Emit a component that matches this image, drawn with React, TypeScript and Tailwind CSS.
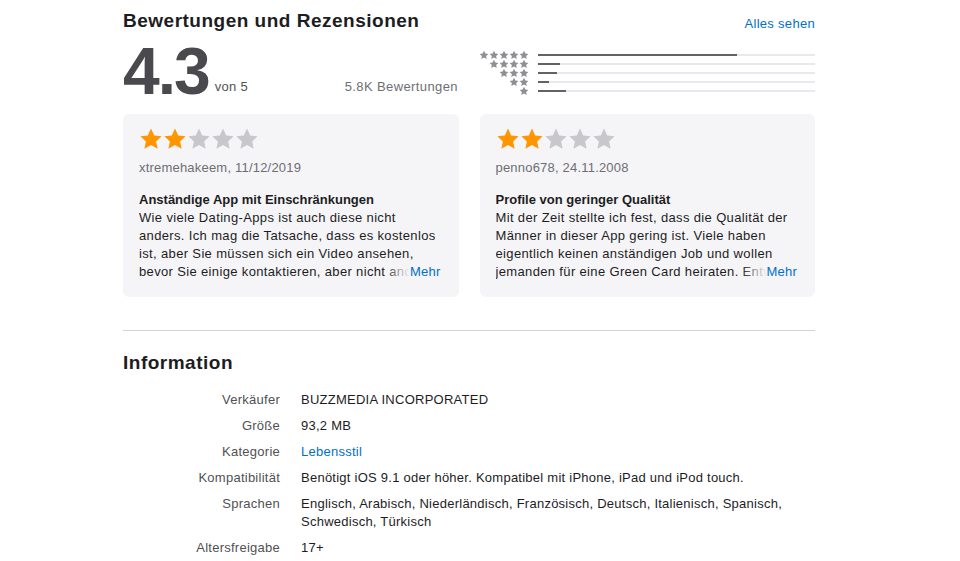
import React from 'react';

const FONT = { fontFamily: '"Liberation Sans", Arial, sans-serif' };

function Star({ className }: { className?: string }) {
  return (
    <svg viewBox="0 0 24 24" className={className} fill="currentColor">
      <path d="M12 1.6l3.2 6.9 7.4.8-5.5 5.1 1.5 7.4L12 18.1l-6.6 3.7 1.5-7.4L1.4 9.3l7.4-.8z" />
    </svg>
  );
}

const HISTOGRAM = [
  { stars: 5, pct: 72 },
  { stars: 4, pct: 8 },
  { stars: 3, pct: 7 },
  { stars: 2, pct: 4 },
  { stars: 1, pct: 10 },
];

const REVIEWS = [
  {
    rating: 2,
    author: 'xtremehakeem, 11/12/2019',
    title: 'Anständige App mit Einschränkungen',
    body:
      'Wie viele Dating-Apps ist auch diese nicht anders. Ich mag die Tatsache, dass es kostenlos ist, aber Sie müssen sich ein Video ansehen, bevor Sie einige kontaktieren, aber nicht andere, und das nervt auf Dauer ziemlich.',
  },
  {
    rating: 2,
    author: 'penno678, 24.11.2008',
    title: 'Profile von geringer Qualität',
    body:
      'Mit der Zeit stellte ich fest, dass die Qualität der Männer in dieser App gering ist. Viele haben eigentlich keinen anständigen Job und wollen jemanden für eine Green Card heiraten. Entwe\u00ADder das oder sie suchen nur Spaß.',
  },
];

const INFO = [
  { label: 'Verkäufer', value: 'BUZZMEDIA INCORPORATED' },
  { label: 'Größe', value: '93,2 MB' },
  { label: 'Kategorie', value: 'Lebensstil', link: true },
  { label: 'Kompatibilität', value: 'Benötigt iOS 9.1 oder höher. Kompatibel mit iPhone, iPad und iPod touch.' },
  {
    label: 'Sprachen',
    value: 'Englisch, Arabisch, Niederländisch, Französisch, Deutsch, Italienisch, Spanisch, Schwedisch, Türkisch',
  },
  { label: 'Altersfreigabe', value: '17+' },
];

function ReviewCard({ review }: { review: (typeof REVIEWS)[number] }) {
  return (
    <div className="flex-1 bg-[#f5f5f7] rounded-md px-4 pt-[13px] h-[183px] tracking-[0.2px]">
      {/* Stars */}
      <div className="flex">
        {[0, 1, 2, 3, 4].map((i) => (
          <Star
            key={i}
            className={`w-6 h-6 ${i < review.rating ? 'text-[#ff9500]' : 'text-[#c7c7cc]'}`}
          />
        ))}
      </div>
      <div className="mt-[8px] text-[13px] leading-[18px] text-[#6e6e73]">{review.author}</div>
      <div className="mt-[14px] text-[13px] leading-[18px] font-bold text-[#1d1d1f] tracking-normal">{review.title}</div>
      <div className="relative">
        <p className="text-[13px] leading-[18px] text-[#1d1d1f] h-[72px] overflow-hidden tracking-[0.35px]">
          {review.body}
        </p>
        <div className="absolute right-0 bottom-0 flex h-[18px]">
          <div className="w-[26px] bg-gradient-to-r from-[#f5f5f7]/0 to-[#f5f5f7]" />
          <span className="bg-[#f5f5f7] pr-[2px] text-[13px] leading-[18px] text-[#0070c9]">Mehr</span>
        </div>
      </div>
    </div>
  );
}

export default function App() {
  return (
    <div className="bg-white min-h-[561px] text-[#1d1d1f]" style={FONT}>
      <div className="ml-[123px] w-[692px] pt-[9px]">
        {/* Header */}
        <div className="flex items-end justify-between">
          <h2 className="text-[19px] leading-[24px] font-bold tracking-[0.5px]">Bewertungen und Rezensionen</h2>
          <a className="text-[13px] leading-[18px] text-[#0070c9] tracking-[0.3px]">Alles sehen</a>
        </div>

        {/* Rating summary */}
        <div className="flex mt-[15px] h-[52px]">
          <div className="w-[335px] flex items-end pb-[4px]">
            <span className="text-[66px] leading-[50px] font-bold text-[#4a4a4e] tracking-[-2px]">4.3</span>
            <span className="ml-[6px] text-[13px] leading-[18px] text-[#515154] tracking-[0.3px]">von 5</span>
            <span className="ml-auto text-[13px] leading-[18px] text-[#6e6e73] tracking-[0.4px]">5.8K Bewertungen</span>
          </div>
          <div className="ml-[21px] flex-1 flex flex-col pt-[2px]">
            {HISTOGRAM.map((row) => (
              <div key={row.stars} className="flex items-center h-[9px]">
                <div className="w-[50px] flex justify-end">
                  {Array.from({ length: row.stars }).map((_, i) => (
                    <Star key={i} className="w-[10px] h-[10px] text-[#8e8e93]" />
                  ))}
                </div>
                <div className="ml-[9px] flex-1 h-[2px] bg-[#e8e8ed]">
                  <div className="h-full bg-[#636366]" style={{ width: `${row.pct}%` }} />
                </div>
              </div>
            ))}
          </div>
        </div>

        {/* Reviews */}
        <div className="flex gap-[21px] mt-[14px]">
          {REVIEWS.map((r) => (
            <ReviewCard key={r.author} review={r} />
          ))}
        </div>

        <div className="mt-[33px] border-t border-[#d2d2d7]" />

        {/* Information */}
        <h2 className="mt-[20px] text-[19px] leading-[24px] font-bold tracking-[0.5px]">Information</h2>
        <dl className="mt-[12px] text-[13px] leading-[18px] tracking-[0.25px]">
          {INFO.map((row) => (
            <div key={row.label} className="flex py-[4px]">
              <dt className="w-[157px] text-right text-[#515154]">{row.label}</dt>
              <dd className={`ml-[21px] w-[510px] ${row.link ? 'text-[#0070c9]' : 'text-[#1d1d1f]'}`}>{row.value}</dd>
            </div>
          ))}
        </dl>
      </div>
    </div>
  );
}
